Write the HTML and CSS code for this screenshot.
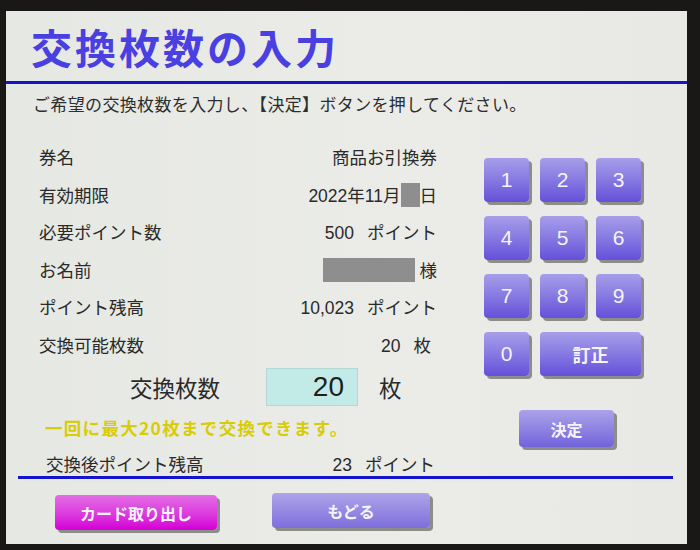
FILE: index.html
```html
<!DOCTYPE html>
<html lang="ja">
<head>
  <meta charset="UTF-8" />
  <meta name="viewport" content="width=device-width, initial-scale=1.0" />
  <title>交換枚数の入力</title>
  <link rel="stylesheet" href="styles.css">
</head>
<body>
  <div class="screen">
    <h1 class="title">交換枚数の入力</h1>
    <div class="rule"></div>
    <p class="lead">ご希望の交換枚数を入力し、【決定】ボタンを押してください。</p>

    <div class="main">
      <div class="info">
        <div class="row"><span>券名</span><span>商品お引換券</span></div>
        <div class="row"><span>有効期限</span><span>2022年11月<i class="mask mask-day"></i>日</span></div>
        <div class="row"><span>必要ポイント数</span><span>500<b class="gap"></b>ポイント</span></div>
        <div class="row"><span>お名前</span><span><i class="mask mask-name"></i>&nbsp;様</span></div>
        <div class="row"><span>ポイント残高</span><span>10,023<b class="gap"></b>ポイント</span></div>
        <div class="row"><span>交換可能枚数</span><span class="unit">20<b class="gap"></b>枚</span></div>

        <div class="amount">
          <span class="amount-label">交換枚数</span>
          <span class="amount-box" id="amount">20</span>
          <span class="amount-unit">枚</span>
        </div>
        <p class="note">一回に最大20枚まで交換できます。</p>
        <div class="row after"><span>交換後ポイント残高</span><span>23<b class="gap"></b>ポイント</span></div>
      </div>

      <div class="side">
        <div class="keypad">
          <button class="key">1</button>
          <button class="key">2</button>
          <button class="key">3</button>
          <button class="key">4</button>
          <button class="key">5</button>
          <button class="key">6</button>
          <button class="key">7</button>
          <button class="key">8</button>
          <button class="key">9</button>
          <button class="key">0</button>
          <button class="key key-wide">訂正</button>
        </div>
        <button class="key key-ok">決定</button>
      </div>
    </div>

    <div class="rule rule-bottom"></div>
    <div class="footer">
      <button class="btn btn-card">カード取り出し</button>
      <button class="btn btn-back">もどる</button>
    </div>
  </div>
</body>
</html>
```

FILE: styles.css
```css
body {
  margin: 0;
  padding: 11px 0 0 6px;
  height: 550px;
  box-sizing: border-box;
  overflow: hidden;
  background: #1a1816;
  font-family: "Liberation Sans", "Noto Sans CJK JP", sans-serif;
  color: #2a2a2a;
}
.screen {
  width: 681px;
  height: 533px;
  background: linear-gradient(90deg, #e6e8e3, #ebece8 60%, #e8e9e4);
}
.title {
  margin: 0;
  height: 70px;
  padding-left: 25px;
  font-family: "Noto Sans CJK JP", sans-serif;
  font-size: 41px;
  line-height: 70px;
  letter-spacing: 3px;
  font-weight: bold;
  color: #4a40e2;
}
.rule {
  height: 3px;
  background: #1414cf;
}
.rule-bottom {
  margin: 0 14px 0 12px;
}
.lead {
  margin: 0;
  padding: 12px 0 22px 27px;
  font-size: 17px;
  line-height: 20px;
  letter-spacing: 0.35px;
  color: #2e2e2e;
}
.main {
  display: flex;
  height: 338px;
}
.info {
  width: 400px;
  margin-left: 31px;
}
.row {
  display: flex;
  justify-content: space-between;
  align-items: center;
  height: 37.5px;
  font-size: 17.5px;
}
.row span:first-child {
  padding-left: 2px;
}
.row .unit {
  padding-right: 6px;
}
.gap {
  display: inline-block;
  width: 13px;
}
.mask {
  display: inline-block;
  vertical-align: -5px;
  background: #8e8e8e;
  height: 24px;
}
.mask-day {
  width: 19px;
}
.mask-name {
  width: 92px;
}
.amount {
  display: flex;
  align-items: center;
  height: 38px;
  margin-top: 5px;
  font-size: 22.5px;
}
.amount-label {
  margin-left: 93px;
  width: 136px;
}
.amount-box {
  width: 92px;
  height: 38px;
  box-sizing: border-box;
  padding-right: 13px;
  background: #c2eae6;
  border: 1px solid #b4d8d4;
  text-align: right;
  font-size: 28px;
  line-height: 36px;
  color: #1e1e1e;
}
.amount-unit {
  margin-left: 21px;
}
.note {
  margin: 0 0 0 8px;
  height: 44px;
  line-height: 44px;
  font-family: "Noto Sans CJK JP", sans-serif;
  font-size: 17.5px;
  letter-spacing: 1.3px;
  font-weight: bold;
  color: #d8cc08;
}
.row.after {
  height: 26px;
  width: 398px;
}
.row.after span:first-child {
  padding-left: 9px;
}
.side {
  margin-left: 47px;
  padding-top: 20px;
}
.keypad {
  display: grid;
  grid-template-columns: 45px 45px 45px;
  grid-auto-rows: 44px;
  gap: 14px 11px;
}
.key,
.btn {
  border: none;
  border-radius: 4px;
  padding: 0;
  color: #f4f4fa;
  font-family: "Liberation Sans", "Noto Sans CJK JP", sans-serif;
  background: linear-gradient(#a79ee9, #8a7de2 45%, #6450da);
  box-shadow: 3px 3px 0 #8c8c8a;
}
.key {
  font-size: 21px;
}
.key-wide {
  grid-column: span 2;
  font-size: 18px;
  font-weight: bold;
  font-family: "Noto Sans CJK JP", sans-serif;
}
.key-ok {
  display: block;
  width: 95px;
  height: 37px;
  margin: 34px 0 0 35px;
  font-size: 16px;
  font-weight: bold;
  font-family: "Noto Sans CJK JP", sans-serif;
  background: linear-gradient(#aaa2ea, #8f84e2 50%, #7262dc);
}
.footer {
  display: flex;
  align-items: flex-start;
  padding: 14px 0 0 49px;
  gap: 55px;
}
.btn {
  height: 35px;
  font-size: 16px;
  font-weight: bold;
  font-family: "Noto Sans CJK JP", sans-serif;
}
.btn-card {
  width: 162px;
  margin-top: 2px;
  background: linear-gradient(#e26ee4, #dc3ade 55%, #d400d6);
}
.btn-back {
  width: 158px;
  background: linear-gradient(#ada4ea, #9689e2 50%, #7d6edc);
}
```
